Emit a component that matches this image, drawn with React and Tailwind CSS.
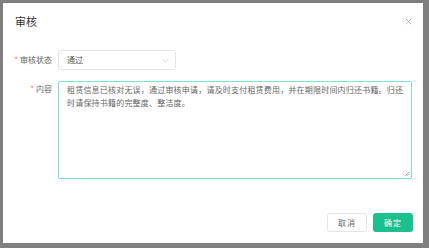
import React from "react";

export default function App() {
  const font = { fontFamily: '"Noto Sans CJK SC", "Noto Sans", sans-serif' };
  return (
    <div className="w-[429px] h-[248px] bg-[#7f7f7f] overflow-hidden pt-[3px] pl-[3px]" style={font}>
      <div className="w-[420px] h-[240px] bg-white flex flex-col">
        <div className="flex items-center justify-between h-[34px] pt-[2px] pl-[12px] pr-[11px]">
          <span className="text-[11px] text-[#333] leading-none">审核</span>
          <svg width="7" height="7" viewBox="0 0 10 10" className="text-[#aaa]">
            <path d="M1 1 L9 9 M9 1 L1 9" stroke="currentColor" strokeWidth="1.2" />
          </svg>
        </div>
        <div className="flex items-center mt-[13px] h-[20px]">
          <div className="w-[55px] pr-[6px] text-right text-[8px] text-[#666] leading-none">
            <span className="text-[#f56c6c] mr-[2px]">*</span>审核状态
          </div>
          <div className="w-[118px] h-[20px] border border-[#e4e4e4] rounded-[3px] flex items-center justify-between pl-[8px] pr-[6px]">
            <span className="text-[8px] text-[#555] leading-none">通过</span>
            <svg width="7" height="5" viewBox="0 0 10 6" className="text-[#bbb]">
              <path d="M1 1 L5 5 L9 1" fill="none" stroke="currentColor" strokeWidth="1" />
            </svg>
          </div>
        </div>
        <div className="flex mt-[11px]">
          <div className="w-[55px] pr-[6px] text-right text-[8px] text-[#666] leading-none pt-[4px]">
            <span className="text-[#f56c6c] mr-[2px]">*</span>内容
          </div>
          <div className="relative w-[354px] h-[98px] border border-[#7ee3c9] rounded-[2px] pl-[8px] pr-[2px] pt-[1px]">
            <p className="text-[8px] leading-[13px] text-[#666] tracking-[0.2px]">
              租赁信息已核对无误，通过审核申请，请及时支付租赁费用，并在期限时间内归还书籍。归还时请保持书籍的完整度、整洁度。
            </p>
            <svg width="6" height="6" viewBox="0 0 6 6" className="absolute right-[1px] bottom-[1px] text-[#999]">
              <path d="M5 1 L1 5 M5 3 L3 5" stroke="currentColor" strokeWidth="0.8" />
            </svg>
          </div>
        </div>
        <div className="flex justify-end gap-[6px] mt-[34px] pr-[10px]">
          <button className="w-[40px] h-[19px] border border-[#e6e6e6] rounded-[3px] bg-white text-[8px] text-[#666] leading-none tracking-[1px]">
            取消
          </button>
          <button className="w-[40px] h-[19px] rounded-[3px] bg-[#1bc18c] text-[8px] text-white leading-none tracking-[1px]">
            确定
          </button>
        </div>
      </div>
    </div>
  );
}
